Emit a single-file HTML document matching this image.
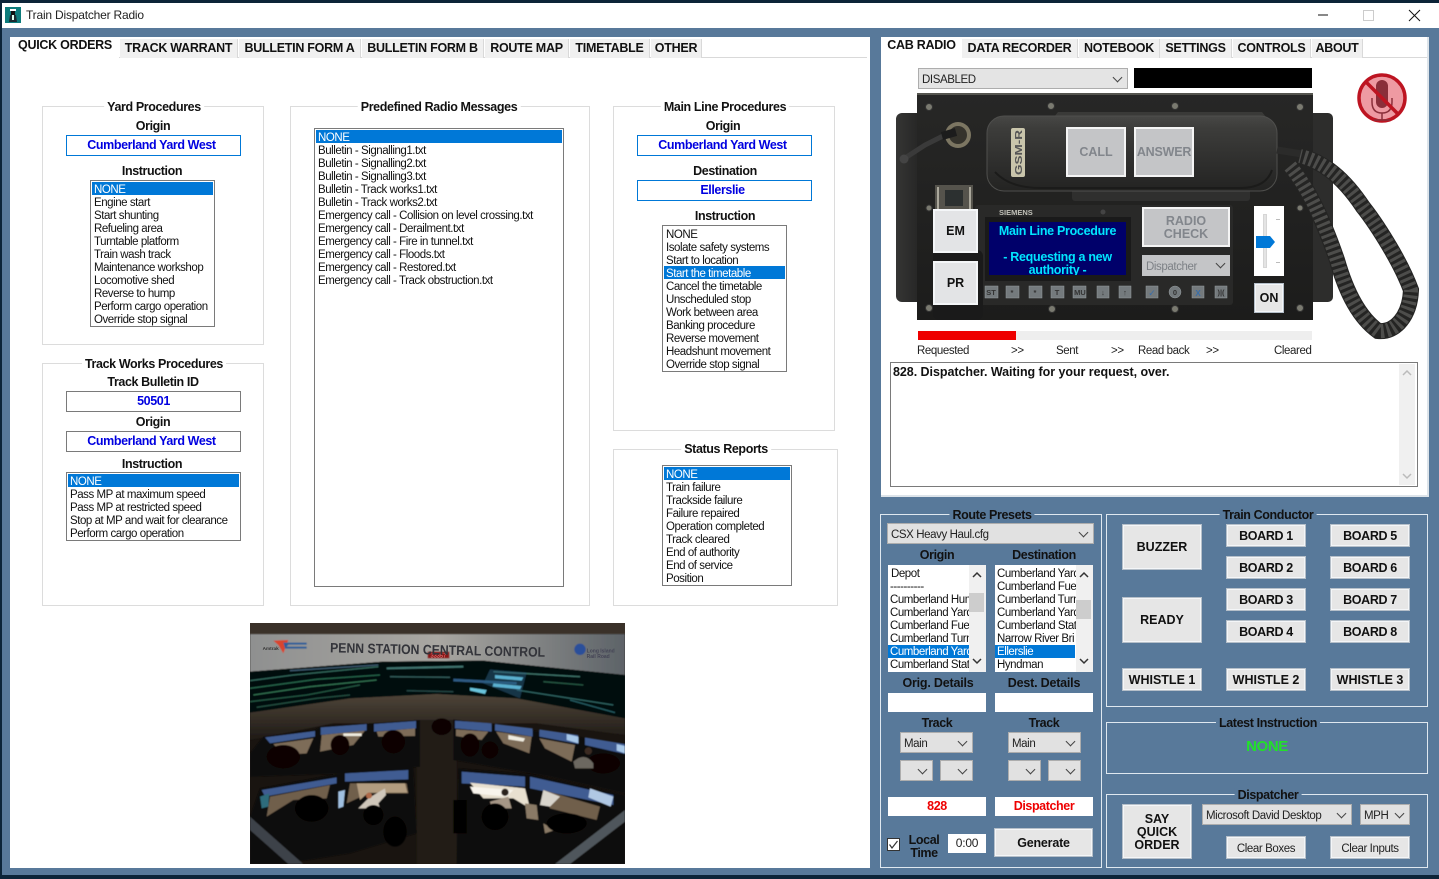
<!DOCTYPE html>
<html><head><meta charset="utf-8"><title>Train Dispatcher Radio</title>
<style>
*{box-sizing:border-box}
html,body{margin:0;padding:0;width:1439px;height:879px;overflow:hidden;background:#0c2438}
body{position:relative;font-family:"Liberation Sans",sans-serif;font-size:12px;color:#000}
div{position:absolute;white-space:nowrap}
.tb{font-weight:bold;font-size:12.5px;text-align:center;color:#111;letter-spacing:-.4px;line-height:14px;height:14px}
.tab{top:39px;height:19px;background:#f0f0f0;border-right:1px solid #d9d9d9;font-weight:bold;font-size:12.5px;text-align:center;line-height:18px;color:#111;letter-spacing:-.27px}
.act{top:37px;height:21px;background:#fff;line-height:17px;border:0}
.grp{border:1px solid #dcdcdc}
.grpb{border:1px solid #dfe8f0}
.leg{background:#fff;padding:0 3px;font-weight:bold;font-size:12.5px;line-height:14px;height:14px;letter-spacing:-.38px;color:#111;transform:translateX(-50%)}
.leb{background:#58799a}
.box{border:1px solid #0078d7;background:#fff;color:#0000e0;font-weight:bold;font-size:12.5px;text-align:center;line-height:19px;letter-spacing:-.4px;background-clip:padding-box}
.bx2{border-color:#7a7a7a;background:#fff}
.lst{background:#fff;border:1px solid #7a7a7a;overflow:hidden;font-size:11.500px;line-height:17px;letter-spacing:-.45px;padding:1px 1px}
.lst span{display:block;height:13px;padding-left:2px;color:#111}
.lst .s{background:#0078d7;color:#fff}
.sel{background:#e1e1e1;border:1px solid #adadad;font-size:11.500px;line-height:23px;padding-left:3px;color:#222;letter-spacing:-.4px}
.sel:after{content:"";position:absolute;right:6px;top:5px;width:6px;height:6px;border-right:1px solid #444;border-bottom:1px solid #444;transform:rotate(45deg)}
.btn{background:#e6e6e6;border:2px solid #f4f6f8;outline:1px solid #b5bfc9;outline-offset:-1px;font-weight:bold;font-size:12.5px;text-align:center;color:#111;letter-spacing:0;white-space:normal;line-height:13px}
.bd{letter-spacing:-.35px;line-height:21px}
.cl{font-weight:normal;font-size:11.500px;letter-spacing:-.4px;line-height:23px;color:#222}
.w{background:#fff}
.lab{font-size:11.500px;color:#222;letter-spacing:-.4px;line-height:14px}
.dis{background:#c4c5c7;border:2px solid #f4f4f4;color:#82868c;font-weight:bold;font-size:12.5px;text-align:center;white-space:normal;line-height:13px}
</style></head><body>
<!-- window -->
<div style="left:2px;top:3px;width:1437px;height:872px;background:#58799a"></div>
<div style="left:2px;top:3px;width:1437px;height:25px;background:#fff"></div>
<svg style="position:absolute;left:5px;top:7px" width="16" height="16" viewBox="0 0 16 16"><rect width="16" height="16" fill="#0d7c7c"/><rect x="5" y="2" width="6" height="2" fill="#fff"/><rect x="6" y="4" width="4" height="4" fill="#111"/><path d="M4 15 L5 8 H11 L12 15Z" fill="#1a2a30"/><rect x="7" y="8" width="2" height="5" fill="#dfe"/></svg>
<div style="left:26px;top:8px;font-size:12px;line-height:14px;color:#222;letter-spacing:-.2px">Train Dispatcher Radio</div>
<svg style="position:absolute;left:1310px;top:6px" width="115" height="18"><path d="M8 9H18" stroke="#111"/><rect x="53.500" y="4.500" width="10" height="10" fill="none" stroke="#ccc"/><path d="M99 4L110 15M110 4L99 15" stroke="#111" fill="none"/></svg>

<!-- left panel -->
<div style="left:10px;top:37px;width:860px;height:831px;background:#fff"></div>
<div style="left:119px;top:57px;width:748px;height:1px;background:#d9d9d9"></div>
<div class="tab act" style="left:11px;width:108px">QUICK ORDERS</div>
<div class="tab" style="left:120px;width:118px">TRACK WARRANT</div>
<div class="tab" style="left:239px;width:122px">BULLETIN FORM A</div>
<div class="tab" style="left:362px;width:122px">BULLETIN FORM B</div>
<div class="tab" style="left:485px;width:84px">ROUTE MAP</div>
<div class="tab" style="left:570px;width:80px">TIMETABLE</div>
<div class="tab" style="left:651px;width:51px">OTHER</div>

<!-- Yard -->
<div class="grp" style="left:42px;top:106px;width:222px;height:239px"></div>
<div class="leg" style="left:154px;top:100px">Yard Procedures</div>
<div class="tb" style="left:42px;top:119px;width:222px">Origin</div>
<div class="box" style="left:66px;top:135px;width:175px;height:21px;padding-right:4px">Cumberland Yard West</div>
<div class="tb" style="left:42px;top:164px;width:220px">Instruction</div>
<div class="lst" style="left:90px;top:180px;width:125px;height:147px"><span class="s">NONE</span><span>Engine start</span><span>Start shunting</span><span>Refueling area</span><span>Turntable platform</span><span>Train wash track</span><span>Maintenance workshop</span><span>Locomotive shed</span><span>Reverse to hump</span><span>Perform cargo operation</span><span>Override stop signal</span></div>

<!-- Track works -->
<div class="grp" style="left:42px;top:363px;width:222px;height:243px"></div>
<div class="leg" style="left:154px;top:357px">Track Works Procedures</div>
<div class="tb" style="left:42px;top:375px;width:222px">Track Bulletin ID</div>
<div class="box bx2" style="left:66px;top:391px;width:175px;height:21px">50501</div>
<div class="tb" style="left:42px;top:415px;width:222px">Origin</div>
<div class="box bx2" style="left:66px;top:431px;width:175px;height:21px;padding-right:4px">Cumberland Yard West</div>
<div class="tb" style="left:42px;top:457px;width:220px">Instruction</div>
<div class="lst" style="left:66px;top:472px;width:175px;height:69px"><span class="s">NONE</span><span>Pass MP at maximum speed</span><span>Pass MP at restricted speed</span><span>Stop at MP and wait for clearance</span><span>Perform cargo operation</span></div>

<!-- Predefined -->
<div class="grp" style="left:290px;top:106px;width:300px;height:500px"></div>
<div class="leg" style="left:439px;top:100px">Predefined Radio Messages</div>
<div class="lst" style="left:314px;top:128px;width:250px;height:459px"><span class="s">NONE</span><span>Bulletin - Signalling1.txt</span><span>Bulletin - Signalling2.txt</span><span>Bulletin - Signalling3.txt</span><span>Bulletin - Track works1.txt</span><span>Bulletin - Track works2.txt</span><span>Emergency call - Collision on level crossing.txt</span><span>Emergency call - Derailment.txt</span><span>Emergency call - Fire in tunnel.txt</span><span>Emergency call - Floods.txt</span><span>Emergency call - Restored.txt</span><span>Emergency call - Track obstruction.txt</span></div>

<!-- Main line -->
<div class="grp" style="left:613px;top:106px;width:222px;height:325px"></div>
<div class="leg" style="left:725px;top:100px">Main Line Procedures</div>
<div class="tb" style="left:613px;top:119px;width:220px">Origin</div>
<div class="box" style="left:637px;top:135px;width:175px;height:21px;padding-right:4px">Cumberland Yard West</div>
<div class="tb" style="left:613px;top:164px;width:224px">Destination</div>
<div class="box" style="left:637px;top:180px;width:175px;height:21px;padding-right:4px">Ellerslie</div>
<div class="tb" style="left:613px;top:209px;width:224px">Instruction</div>
<div class="lst" style="left:662px;top:225px;width:125px;height:147px"><span>NONE</span><span>Isolate safety systems</span><span>Start to location</span><span class="s">Start the timetable</span><span>Cancel the timetable</span><span>Unscheduled stop</span><span>Work between area</span><span>Banking procedure</span><span>Reverse movement</span><span>Headshunt movement</span><span>Override stop signal</span></div>

<!-- Status -->
<div class="grp" style="left:613px;top:449px;width:225px;height:157px"></div>
<div class="leg" style="left:726px;top:442px">Status Reports</div>
<div class="lst" style="left:662px;top:465px;width:130px;height:121px"><span class="s">NONE</span><span>Train failure</span><span>Trackside failure</span><span>Failure repaired</span><span>Operation completed</span><span>Track cleared</span><span>End of authority</span><span>End of service</span><span>Position</span></div>

<!-- Photo -->
<svg style="position:absolute;left:250px;top:623px" width="375" height="241" viewBox="0 9 1125 723">
<defs>
<linearGradient id="wl" x1="0" x2="1" y1="0" y2="0"><stop offset="0" stop-color="#8f9090"/><stop offset=".5" stop-color="#a9a7a2"/><stop offset="1" stop-color="#5d6368"/></linearGradient>
<linearGradient id="wb" x1="0" x2="0" y1="0" y2="1"><stop offset="0" stop-color="#4e4438"/><stop offset="1" stop-color="#1e1a16"/></linearGradient>
<filter id="bl"><feGaussianBlur stdDeviation="1.800"/></filter>
</defs>
<rect y="9" width="1125" height="723" fill="#191410"/>
<rect y="9" width="1125" height="33" fill="#3a3129"/>
<g filter="url(#bl)">
<path d="M0 42H1125V165L700 122L400 125L0 155Z" fill="url(#wl)"/>
<path d="M0 155L400 125L700 122L1125 165V295L800 235L560 222L300 235L0 278Z" fill="#040a0c"/>
<path d="M0 278L300 235L560 222L800 235L1125 295V345L860 310H250L0 360Z" fill="url(#wb)"/>
<path d="M500 300H620V732H500Z" fill="#221c17"/>
<!-- wall display -->
<g fill="none" stroke-width="4" opacity=".8">
<path d="M0 182L130 165L385 140" stroke="#3f7d6e"/><path d="M120 152L385 135" stroke="#4a6e8a"/><path d="M0 205L200 178L390 165" stroke="#2f7a5a"/><path d="M10 225L180 200L380 180" stroke="#3b8a60"/><path d="M0 245L170 225L330 195" stroke="#2d6a50"/><path d="M20 262L200 235L300 225" stroke="#2a5e4c"/>
<path d="M410 145L640 140" stroke="#4f8f8a" stroke-width="6"/><path d="M420 170L600 172" stroke="#3c6e6c"/><path d="M470 212L610 215" stroke="#2e5654"/>
<path d="M730 155L990 170" stroke="#4a8c80"/><path d="M800 210L1090 255" stroke="#3a7a78"/><path d="M880 185L1000 195" stroke="#2f6a50"/><path d="M960 240L1095 278" stroke="#2f7078"/><path d="M610 180L800 190" stroke="#386ea0" stroke-width="8"/>
</g>
<path d="M720 148L830 158L810 235L700 190Z" fill="#2c5f80" opacity=".5"/>
<path d="M660 203L710 210L705 222L660 212Z" fill="#69c4dc"/><path d="M735 165L820 172L815 182L735 175ZM730 190L815 198L810 208L728 200Z" fill="#5ab0d0"/>
<!-- top consoles -->
<path d="M0 400L40 350L195 330L210 320L360 310L510 300L510 440L300 460L0 470Z" fill="#0e0b09"/>
<path d="M610 298L1125 370V520L900 470L610 420Z" fill="#0e0b09"/>
<g fill="#3f5c92"><path d="M45 352L195 333V350L60 370Z"/><path d="M212 322L350 312V332L212 345Z"/><path d="M372 312L498 303V325L372 335Z"/><path d="M615 302L725 310V335L615 325Z"/><path d="M735 312L848 325V350L735 332Z"/><path d="M868 328L985 345V372L868 350Z"/><path d="M1005 352L1125 372V402L1005 375Z"/></g>
<g fill="#a8c8e8"><path d="M950 342L985 350V370L950 360Z"/><path d="M1100 372L1125 378V400L1100 392Z"/></g>
<g fill="#7d6c58"><path d="M70 372L190 355L170 400L100 405Z"/><path d="M215 345L345 332L310 375L210 395Z"/><path d="M380 335L495 325V348L385 350Z"/><path d="M618 328L715 335L695 360L618 348Z"/><path d="M738 335L845 350L838 400L760 370Z"/><path d="M868 355L975 375L965 425L885 385Z"/></g>
<g fill="#f0ece0"><path d="M280 340H335V348H280Z"/><path d="M775 345L825 355L820 365L775 358Z"/></g>
<g fill="#070504"><ellipse cx="430" cy="365" rx="35" ry="35"/><ellipse cx="270" cy="375" rx="28" ry="30"/><ellipse cx="100" cy="410" rx="50" ry="35"/><ellipse cx="660" cy="375" rx="28" ry="35"/><ellipse cx="720" cy="390" rx="25" ry="25"/><ellipse cx="575" cy="320" rx="30" ry="25"/><ellipse cx="1060" cy="430" rx="50" ry="30"/></g>
<path d="M970 425Q1005 395 1030 430V445H975Z" fill="#6c6860"/><circle cx="1015" cy="393" r="11" fill="#3a2c24"/>
<!-- bottom consoles -->
<path d="M0 590L30 505L260 462L490 440L500 640L300 700L100 732H0Z" fill="#0d0a08"/>
<path d="M625 445L840 462L1125 525V732H620Z" fill="#0d0a08"/>
<g fill="#3f5c92"><path d="M35 510L260 472V490L45 530Z"/><path d="M285 460L475 450V478L285 485Z"/><path d="M635 455L825 470V500L635 490Z"/><path d="M840 470L1090 525V555L840 505Z"/></g>
<path d="M1020 505L1090 530L1082 560L1015 532Z" fill="#b0c8e4"/><path d="M30 530L58 520L55 560L35 565Z" fill="#2f6c7c"/><path d="M265 515L285 510L280 560L265 565Z" fill="#a0c0e0"/>
<g fill="#6f5e4c"><path d="M60 530L240 495L230 535L130 540L50 590Z"/><path d="M300 490H470L475 520H355L290 550Z"/><path d="M880 510L1050 560L1040 600L900 565Z"/></g>
<path d="M320 490H465L472 518H355L330 540Z" fill="#b29c80"/>
<path d="M660 488L825 505L840 565L790 535H700Z" fill="#e8e0d0"/>
<path d="M660 500L790 510L770 530L670 520Z" fill="#f8f4ec"/>
<path d="M825 550L860 555L865 600L830 595Z" fill="#8a7a66"/><path d="M880 610L915 630L885 640Z" fill="#8a7a66"/>
<path d="M880 510L930 530L900 560L870 555Z" fill="#d8d4cc"/>
<path d="M320 570L355 535L405 505L408 525L385 550L390 565H325Z" fill="#cfc6ba"/><circle cx="357" cy="527" r="9" fill="#b06a4a"/>
<path d="M720 545L775 530L785 565H725Z" fill="#a59686"/><circle cx="765" cy="517" r="11" fill="#2c221c"/>
<g fill="#060403"><ellipse cx="435" cy="635" rx="35" ry="45"/><ellipse cx="370" cy="585" rx="30" ry="30"/><ellipse cx="185" cy="565" rx="50" ry="40"/><ellipse cx="735" cy="590" rx="40" ry="40"/><rect x="610" y="540" width="40" height="100"/><ellipse cx="950" cy="610" rx="60" ry="30"/></g>
<path d="M0 590L160 732H115L0 630Z" fill="#3d4248"/><path d="M1125 570L915 732H960L1125 605Z" fill="#50565c"/>
<path d="M70 62L115 60L100 100L85 75Z" fill="#d9442e"/><path d="M100 68H170V74H115L110 80H170V86H105Z" fill="#2f5f99"/>
<circle cx="990" cy="88" r="17" fill="#2c4f9a"/>
<rect x="533" y="95" width="65" height="20" fill="#8a1515"/>
</g>
<text x="565" y="112" font-size="17" fill="#e88" text-anchor="middle" font-family="Liberation Sans">33357</text>
<text x="38" y="90" font-size="14" fill="#333" font-family="Liberation Sans" font-weight="bold">Amtrak</text>
<text x="1010" y="98" font-size="15" fill="#445" font-family="Liberation Sans" font-weight="bold">Long Island</text><text x="1010" y="114" font-size="15" fill="#445" font-family="Liberation Sans" font-weight="bold">Rail Road</text>
<text x="240" y="97" font-family="Liberation Sans" font-weight="bold" font-size="41" fill="#33343a" transform="rotate(1.200 240 97)" textLength="645" lengthAdjust="spacingAndGlyphs">PENN STATION CENTRAL CONTROL</text>
</svg>

<!-- Right top panel -->
<div style="left:881px;top:37px;width:548px;height:460px;background:#fff;border-right:2px solid #dde4ea;border-bottom:2px solid #dde4ea"></div>
<div style="left:962px;top:57px;width:465px;height:1px;background:#d9d9d9"></div>
<div class="tab act" style="left:881px;width:81px">CAB RADIO</div>
<div class="tab" style="left:962px;width:116px">DATA RECORDER</div>
<div class="tab" style="left:1079px;width:81px">NOTEBOOK</div>
<div class="tab" style="left:1160px;width:72px">SETTINGS</div>
<div class="tab" style="left:1233px;width:78px">CONTROLS</div>
<div class="tab" style="left:1312px;width:51px">ABOUT</div>

<div class="sel" style="left:918px;top:68px;width:210px;height:21px;background:#e4e4e4">DISABLED</div>
<div style="left:1134px;top:68px;width:178px;height:20px;background:#000"></div>

<svg style="position:absolute;left:880px;top:60px" width="559" height="290" viewBox="880 60 559 290">
<defs><linearGradient id="hs" x1="0" x2="0" y1="0" y2="1"><stop offset="0" stop-color="#484846"/><stop offset=".15" stop-color="#3d3d3b"/><stop offset="1" stop-color="#232322"/></linearGradient>
<linearGradient id="pn" x1="0" x2="0" y1="0" y2="1"><stop offset="0" stop-color="#272726"/><stop offset="1" stop-color="#1c1c1b"/></linearGradient>
<linearGradient id="sd" x1="0" x2="1" y1="0" y2="0"><stop offset="0" stop-color="#353534"/><stop offset="1" stop-color="#222221"/></linearGradient></defs>
<rect x="896" y="113" width="30" height="189" rx="6" fill="url(#sd)"/>
<rect x="1305" y="113" width="28" height="189" rx="5" fill="#2d2d2c"/>
<rect x="917" y="93" width="396" height="227" fill="url(#pn)"/>
<rect x="917" y="93" width="396" height="2" fill="#55554f"/>
<g fill="#7a7a70" stroke="#333"><circle cx="929" cy="107" r="3.500"/><circle cx="1051" cy="106" r="3.500"/><circle cx="1175" cy="106" r="3.500"/><circle cx="1300" cy="107" r="3.500"/><circle cx="929" cy="308" r="3.500"/><circle cx="1052" cy="309" r="3.500"/><circle cx="1175" cy="309" r="3.500"/><circle cx="1300" cy="308" r="3.500"/><circle cx="929" cy="208" r="3"/><circle cx="1300" cy="208" r="3"/></g>
<path d="M1058 112H1262L1270 122H1050Z" fill="#3a3a38"/>
<rect x="1072" y="186" width="178" height="15" rx="3" fill="#2f2f2e"/>
<rect x="987" y="116" width="290" height="75" rx="17" fill="url(#hs)" stroke="#4f4f4d"/>
<path d="M995 172Q1010 188 1040 188H1240Q1266 188 1272 170" fill="none" stroke="#1b1b1a" stroke-width="2"/>
<rect x="1011" y="128" width="14" height="49" rx="2" fill="#c9c5ab"/>
<text x="1022" y="175" transform="rotate(-90 1022 175)" font-family="Liberation Sans" font-weight="bold" font-size="10.500" fill="#555" textLength="45" lengthAdjust="spacingAndGlyphs">GSM-R</text>
<path d="M905 158L925 145L945 135" stroke="#3a3a3a" stroke-width="5" stroke-linecap="round" fill="none"/><circle cx="904" cy="159" r="4.500" fill="#444"/>
<circle cx="958" cy="135" r="13" fill="#7c7662"/><circle cx="958" cy="135" r="9" fill="#35332c"/>
<path d="M942 136L956 132" stroke="#1c1c1c" stroke-width="8"/>
<rect x="935" y="185" width="38" height="25" fill="#55534c"/><rect x="945" y="190" width="18" height="16" fill="#2c3030"/><path d="M938 187V209M970 187V209" stroke="#aaa79b" stroke-width="2"/>
<rect x="975" y="205" width="258" height="100" rx="3" fill="#292928"/>
<rect x="985" y="217" width="146" height="64" fill="#1a1a1a"/>
<text x="999" y="215" font-family="Liberation Sans" font-weight="bold" font-size="7.500" fill="#c0c0b8">SIEMENS</text>
<circle cx="1103" cy="212" r="2.500" fill="#444"/>
<rect x="933" y="250" width="50" height="70" rx="6" fill="#1a1a1a"/>
<g fill="#747a7d" stroke="#969c9e" stroke-width=".5"><rect x="985" y="286" width="13" height="12"/><rect x="1006" y="286" width="13" height="12"/><rect x="1029" y="286" width="13" height="12"/><rect x="1051" y="286" width="13" height="12"/><rect x="1073" y="286" width="13" height="12"/><rect x="1097" y="286" width="12" height="12"/><rect x="1119" y="286" width="12" height="12"/><rect x="1146" y="286" width="12" height="12"/><circle cx="1175" cy="292" r="6"/><rect x="1192" y="286" width="12" height="12"/><rect x="1215" y="286" width="12" height="12"/></g>
<g font-family="Liberation Sans" font-size="7.500" fill="#333" text-anchor="middle" font-weight="bold"><text x="991" y="295">ST</text><text x="1012" y="295">*</text><text x="1035" y="295">*</text><text x="1057" y="295">T</text><text x="1080" y="295">MU</text><text x="1103" y="295">↓</text><text x="1125" y="295">↑</text><text x="1175" y="295">0</text><text x="1221" y="295">)|(</text></g>
<text x="1152" y="296" font-family="DejaVu Sans" font-size="9" fill="#3a6ea8" text-anchor="middle">✓</text>
<text x="1198" y="296" font-family="Liberation Sans" font-weight="bold" font-size="8" fill="#3a6ea8" text-anchor="middle">X</text>
<!-- cord -->
<path d="M1277 150L1302 154" stroke="#2b2b2a" stroke-width="7" fill="none"/>
<path d="M1290 166C1310 190 1325 225 1337 260C1347 295 1360 318 1378 331C1396 333 1410 315 1411 290C1400 260 1375 222 1363 207C1345 180 1325 162 1300 156" fill="none" stroke="#242423" stroke-width="16"/>
<path d="M1290 166C1310 190 1325 225 1337 260C1347 295 1360 318 1378 331C1396 333 1410 315 1411 290C1400 260 1375 222 1363 207C1345 180 1325 162 1300 156" fill="none" stroke="#4d4d4b" stroke-width="14" stroke-dasharray="3 3"/>
<!-- mic -->
<circle cx="1382" cy="98" r="23" fill="#ee9aa2" stroke="#bd1421" stroke-width="3.500"/>
<rect x="1376" y="80" width="12" height="28" rx="6" fill="#8a2f3a"/>
<path d="M1372 98V102Q1372 113 1382 113Q1392 113 1392 102V98M1382 113V120M1374 120H1390" fill="none" stroke="#8a2f3a" stroke-width="1.500"/>
<path d="M1366 82L1398 114" stroke="#bd1421" stroke-width="3.500"/>
</svg>
<div class="dis" style="left:1066px;top:127px;width:60px;height:50px;line-height:46px">CALL</div>
<div class="dis" style="left:1134px;top:127px;width:60px;height:50px;line-height:46px;letter-spacing:-.2px">ANSWER</div>
<div class="btn" style="left:933px;top:209px;width:45px;height:44px;line-height:40px;outline:0;background:#e3e4e6">EM</div>
<div class="btn" style="left:933px;top:261px;width:45px;height:44px;line-height:40px;outline:0;background:#e3e4e6">PR</div>
<div style="left:989px;top:222px;width:137px;height:53px;background:#00006a;color:#00e5ff;font-weight:bold;font-size:12.5px;text-align:center;line-height:13px;letter-spacing:-.3px;white-space:pre-line;overflow:hidden;padding-top:2.500px">Main Line Procedure

- Requesting a new
authority -</div>
<div class="dis" style="left:1142px;top:207px;width:88px;height:40px;padding-top:6px">RADIO<br>CHECK</div>
<div class="sel" style="left:1142px;top:255px;width:88px;height:21px;background:#c4c5c7;border:0;color:#7d8186;line-height:24px;padding-left:4px">Dispatcher</div>
<div style="left:1254px;top:206px;width:30px;height:70px;background:#fff"></div>
<div style="left:1263px;top:214px;width:4px;height:54px;background:#e4e4e4;border:1px solid #d6d6d6"></div>
<div style="left:1276px;top:219px;width:4px;height:1px;background:#bbb"></div>
<div style="left:1276px;top:262px;width:4px;height:1px;background:#bbb"></div>
<svg style="position:absolute;left:1256px;top:236px" width="20" height="12"><path d="M0 0H14L19 6L14 12H0Z" fill="#0078d7"/></svg>
<div class="btn" style="left:1254px;top:283px;width:30px;height:30px;line-height:26px">ON</div>

<div style="left:918px;top:331px;width:394px;height:9px;background:#eee"></div>
<div style="left:918px;top:331px;width:98px;height:9px;background:#ee0000"></div>
<div class="lab" style="left:917px;top:344px">Requested</div>
<div class="lab" style="left:1011px;top:344px">&gt;&gt;</div>
<div class="lab" style="left:1056px;top:344px">Sent</div>
<div class="lab" style="left:1111px;top:344px">&gt;&gt;</div>
<div class="lab" style="left:1138px;top:344px">Read back</div>
<div class="lab" style="left:1206px;top:344px">&gt;&gt;</div>
<div class="lab" style="left:1274px;top:344px">Cleared</div>

<div style="left:890px;top:362px;width:528px;height:125px;background:#fff;border:1px solid #7a7a7a"></div>
<div style="left:893px;top:365px;font-weight:bold;font-size:12.5px;line-height:14px;color:#111;letter-spacing:-.05px">828. Dispatcher. Waiting for your request, over.</div>
<div style="left:1399px;top:364px;width:16px;height:121px;background:#f0f0f0"></div>
<svg style="position:absolute;left:1399px;top:364px" width="16" height="121"><path d="M4 11L8 7L12 11M4 110L8 114L12 110" fill="none" stroke="#bbb" stroke-width="1.500"/></svg>

<!-- Route Presets -->
<div class="grpb" style="left:880px;top:514px;width:222px;height:354px"></div>
<div class="leg leb" style="left:992px;top:508px">Route Presets</div>
<div class="sel" style="left:887px;top:523px;width:207px;height:21px">CSX Heavy Haul.cfg</div>
<div class="tb" style="left:888px;top:548px;width:98px">Origin</div>
<div class="tb" style="left:995px;top:548px;width:98px">Destination</div>
<div class="lst" style="left:888px;top:565px;width:98px;height:107px;border:0;padding:2px 0 2px 0;line-height:15px"><span style="padding-left:3px">Depot</span><span style="padding-left:2px">----------</span><span>Cumberland Hump</span><span>Cumberland Yard</span><span>Cumberland Fuel</span><span>Cumberland Turn</span><span class="s">Cumberland Yard</span><span>Cumberland Stat</span></div>
<div style="left:969px;top:565px;width:17px;height:107px;background:#f0f0f0"></div>
<div style="left:969px;top:593px;width:15px;height:19px;background:#cdcdcd"></div>
<svg style="position:absolute;left:969px;top:565px" width="17" height="107"><path d="M4 12L8 8L12 12M4 94L8 98L12 94" fill="none" stroke="#333" stroke-width="1.500"/></svg>
<div class="lst" style="left:995px;top:565px;width:98px;height:107px;border:0;padding:2px 0 2px 0;line-height:15px"><span>Cumberland Yard</span><span>Cumberland Fuel</span><span>Cumberland Turn</span><span>Cumberland Yard</span><span>Cumberland Stat</span><span>Narrow River Bri</span><span class="s" style="width:80px">Ellerslie</span><span>Hyndman</span></div>
<div style="left:1076px;top:565px;width:17px;height:107px;background:#f0f0f0"></div>
<div style="left:1076px;top:600px;width:15px;height:19px;background:#cdcdcd"></div>
<svg style="position:absolute;left:1076px;top:565px" width="17" height="107"><path d="M4 12L8 8L12 12M4 94L8 98L12 94" fill="none" stroke="#333" stroke-width="1.500"/></svg>
<div class="tb" style="left:888px;top:676px;width:100px;letter-spacing:-.2px">Orig. Details</div>
<div class="tb" style="left:995px;top:676px;width:98px;letter-spacing:-.2px">Dest. Details</div>
<div class="w" style="left:888px;top:693px;width:98px;height:19px"></div>
<div class="w" style="left:995px;top:693px;width:98px;height:19px"></div>
<div class="tb" style="left:888px;top:716px;width:98px">Track</div>
<div class="tb" style="left:995px;top:716px;width:98px">Track</div>
<div class="sel" style="left:900px;top:732px;width:73px;height:21px">Main</div>
<div class="sel" style="left:1008px;top:732px;width:73px;height:21px">Main</div>
<div class="sel" style="left:900px;top:760px;width:33px;height:21px"></div>
<div class="sel" style="left:940px;top:760px;width:33px;height:21px"></div>
<div class="sel" style="left:1008px;top:760px;width:33px;height:21px"></div>
<div class="sel" style="left:1048px;top:760px;width:33px;height:21px"></div>
<div class="w tb" style="left:888px;top:797px;width:98px;height:19px;color:#ee0000;line-height:19px">828</div>
<div class="w tb" style="left:995px;top:797px;width:98px;height:19px;color:#ee0000;line-height:19px">Dispatcher</div>
<svg style="position:absolute;left:887px;top:838px" width="13" height="13"><rect x=".5" y=".5" width="12" height="12" fill="#fff" stroke="#333"/><path d="M2.500 6.500L5 10L10.500 3" fill="none" stroke="#333" stroke-width="1.200"/></svg>
<div class="tb" style="left:904px;top:834px;width:40px;line-height:13px;height:26px">Local<br>Time</div>
<div class="w" style="left:948px;top:834px;width:38px;height:19px;text-align:center;line-height:18px;color:#222;font-size:12px;letter-spacing:-.2px">0:00</div>
<div class="btn" style="left:994px;top:828px;width:99px;height:29px;line-height:27px;letter-spacing:-.2px">Generate</div>

<!-- Train Conductor -->
<div class="grpb" style="left:1106px;top:514px;width:322px;height:193px"></div>
<div class="leg leb" style="left:1268px;top:508px">Train Conductor</div>
<div class="btn" style="left:1122px;top:524px;width:80px;height:46px;line-height:42px">BUZZER</div>
<div class="btn" style="left:1122px;top:597px;width:80px;height:46px;line-height:42px">READY</div>
<div class="btn bd" style="left:1226px;top:524px;width:80px;height:23px">BOARD 1</div>
<div class="btn bd" style="left:1226px;top:556px;width:80px;height:23px">BOARD 2</div>
<div class="btn bd" style="left:1226px;top:588px;width:80px;height:23px">BOARD 3</div>
<div class="btn bd" style="left:1226px;top:620px;width:80px;height:23px">BOARD 4</div>
<div class="btn bd" style="left:1330px;top:524px;width:80px;height:23px">BOARD 5</div>
<div class="btn bd" style="left:1330px;top:556px;width:80px;height:23px">BOARD 6</div>
<div class="btn bd" style="left:1330px;top:588px;width:80px;height:23px">BOARD 7</div>
<div class="btn bd" style="left:1330px;top:620px;width:80px;height:23px">BOARD 8</div>
<div class="btn" style="left:1122px;top:668px;width:80px;height:23px;line-height:21px">WHISTLE 1</div>
<div class="btn" style="left:1226px;top:668px;width:80px;height:23px;line-height:21px">WHISTLE 2</div>
<div class="btn" style="left:1330px;top:668px;width:80px;height:23px;line-height:21px">WHISTLE 3</div>

<!-- Latest -->
<div class="grpb" style="left:1106px;top:722px;width:322px;height:52px"></div>
<div class="leg leb" style="left:1268px;top:716px">Latest Instruction</div>
<div class="tb" style="left:1106px;top:739px;width:322px;color:#22e02a;font-size:15px;line-height:16px;height:16px">NONE</div>

<!-- Dispatcher -->
<div class="grpb" style="left:1106px;top:794px;width:322px;height:74px"></div>
<div class="leg leb" style="left:1268px;top:788px">Dispatcher</div>
<div class="btn" style="left:1122px;top:804px;width:70px;height:55px;padding-top:7px">SAY QUICK ORDER</div>
<div class="sel" style="left:1202px;top:804px;width:150px;height:21px">Microsoft David Desktop</div>
<div class="sel" style="left:1360px;top:804px;width:50px;height:21px">MPH</div>
<div class="btn cl" style="left:1226px;top:836px;width:80px;height:23px">Clear Boxes</div>
<div class="btn cl" style="left:1330px;top:836px;width:80px;height:23px">Clear Inputs</div>
</body></html>
